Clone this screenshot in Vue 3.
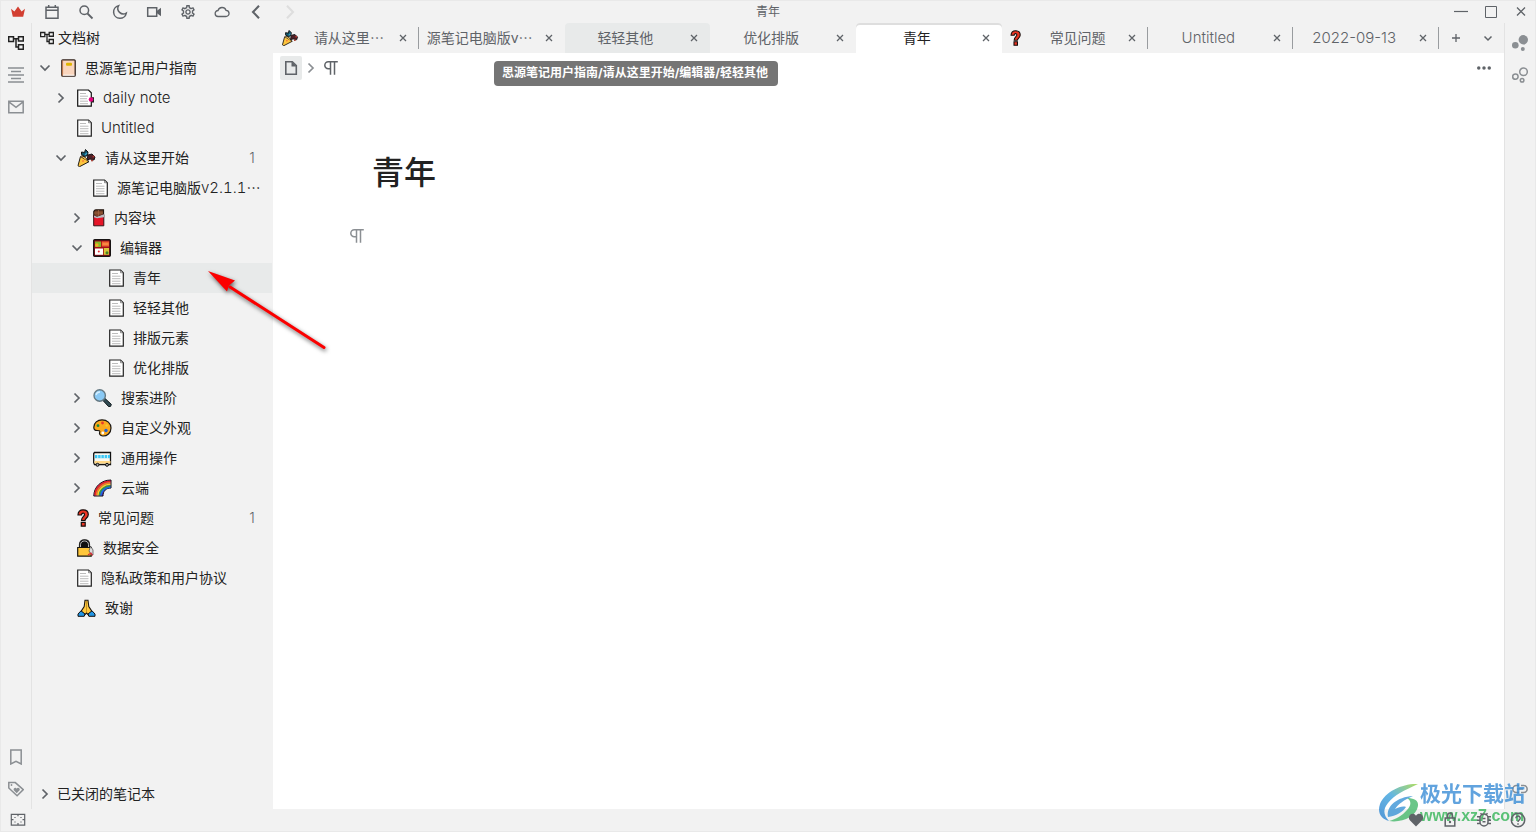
<script setup>
import { ref } from 'vue'

const ui = {
  crown: '<path fill="#d23f31" d="M1 4.800l3.400 2.700L8 2.600l3.600 4.900L15 4.800l-1.800 8H2.800z"/>',
  calendar: '<path d="M2 3.200h12v11H2zM2 6.300h12M4.700 1v2.500M11.300 1v2.500"/>',
  search: '<circle cx="6.300" cy="6.300" r="4.300"/><path d="M9.500 9.500l5 5" stroke-width="1.800"/>',
  moon: '<path d="M6.600 1.700a5.500 5.500 0 0 0 7.700 7.400A6.400 6.400 0 1 1 6.600 1.700z"/>',
  video: '<path d="M1.700 3.700h9v8.600h-9z"/><path d="M10.700 7L15 3.800v8.400L10.700 9z" fill="currentColor" stroke="none"/>',
  gear: '<path transform="translate(-.4 -.4) scale(.7)" fill="currentColor" stroke="none" d="M19.430 12.980c.04-.32.07-.64.07-.98 0-.34-.03-.66-.07-.98l2.110-1.650c.19-.15.24-.42.12-.64l-2-3.460c-.09-.16-.26-.25-.44-.25-.06 0-.12.01-.17.03l-2.490 1c-.52-.4-1.080-.73-1.690-.98l-.38-2.650C14.460 2.180 14.250 2 14 2h-4c-.25 0-.46.18-.49.42l-.38 2.650c-.61.25-1.170.59-1.690.98l-2.490-1c-.06-.02-.12-.03-.18-.03-.17 0-.34.09-.43.25l-2 3.460c-.13.22-.07.49.12.64l2.110 1.650c-.04.32-.07.65-.07.98 0 .33.03.66.07.98l-2.110 1.650c-.19.15-.24.42-.12.64l2 3.460c.09.16.26.25.44.25.06 0 .12-.01.17-.03l2.490-1c.52.4 1.080.73 1.690.98l.38 2.650c.03.24.24.42.49.42h4c.25 0 .46-.18.49-.42l.38-2.650c.61-.25 1.170-.59 1.690-.98l2.490 1c.06.02.12.03.18.03.17 0 .34-.09.43-.25l2-3.460c.12-.22.07-.49-.12-.64l-2.110-1.650zm-1.980-1.710c.04.31.05.52.05.73 0 .21-.02.43-.05.73l-.14 1.130.89.7 1.080.84-.7 1.210-1.270-.51-1.040-.42-.9.68c-.43.32-.84.56-1.250.73l-1.060.43-.16 1.130-.2 1.350h-1.400l-.19-1.350-.16-1.130-1.060-.43c-.43-.18-.83-.41-1.230-.71l-.91-.7-1.060.43-1.270.51-.7-1.210 1.080-.84.89-.7-.14-1.130c-.03-.31-.05-.54-.05-.74s.02-.43.05-.73l.14-1.130-.89-.7-1.080-.84.7-1.210 1.270.51 1.040.42.9-.68c.43-.32.84-.56 1.250-.73l1.060-.43.16-1.130.2-1.350h1.390l.19 1.350.16 1.130 1.060.43c.43.18.83.41 1.230.71l.91.7 1.060-.43 1.270-.51.7 1.210-1.070.85-.89.7.14 1.130zM12 8c-2.210 0-4 1.790-4 4s1.790 4 4 4 4-1.790 4-4-1.790-4-4-4zm0 6c-1.100 0-2-.9-2-2s.9-2 2-2 2 .9 2 2-.9 2-2 2z"/>',
  cloud: '<path d="M4.300 12.500a3 3 0 0 1-.3-6 4.200 4.200 0 0 1 8-.2 3.100 3.100 0 0 1-.1 6.200z" stroke-width="1.300"/>',
  back: '<path d="M11 1.800L5 8l6 6.200" stroke-width="2.100"/>',
  forward: '<path d="M5 1.800L11 8l-6 6.200" stroke-width="2.100"/>',
  minimize: '<path d="M1 7.500h14" stroke-width="1.200"/>',
  maximize: '<path d="M2.500 2.500h11v11h-11z" stroke-width="1"/>',
  close: '<path d="M4 3.500l8 8M12 3.500l-8 8" stroke-width="1.300"/>',
  cross: '<path d="M5 5l6 6M11 5l-6 6" stroke-width="1.300"/>',
  tree: '<path d="M.7 1.700h4.800v4.800H.7zM10.500 1.700h4.800v4.300h-4.800zM10.500 9.700h4.800v4.600h-4.800zM5.500 3.800h5M8 3.800v8.200h2.500"/>',
  outline: '<path d="M0 1h16M3 4.500h10M0 8h16M3 11.500h10M0 15h16" stroke-width="1.500"/>',
  mail: '<path d="M.8 2.300h14.400v11.400H.8zM1.200 3.200L8 8.300l6.800-5.100"/>',
  bookmark: '<path d="M2.800 1h10.400v14L8 12.400 2.800 15z"/>',
  tag: '<path d="M.8 1.600h6.500l8 7-6.200 6.200L.8 7z"/><circle cx="3.500" cy="4" r=".9" fill="currentColor" stroke="none"/><path fill="currentColor" stroke="none" d="M8.700 12.200L5.800 9.300a1.600 1.600 0 0 1 2.900-1.600 1.600 1.600 0 0 1 2.900 1.600z"/>',
  graph: '<g fill="currentColor" stroke="none"><circle cx="11.300" cy="4.800" r="4.700"/><circle cx="3.300" cy="10.300" r="3.300"/><circle cx="10.800" cy="14" r="2"/></g>',
  graphlink: '<circle cx="11.500" cy="4.800" r="3.800"/><circle cx="3.400" cy="9.600" r="2.700"/><circle cx="10.100" cy="13.200" r="1.800"/>',
  down: '<path d="M3.500 5.500L8 10l4.500-4.500" stroke-width="1.700"/>',
  right: '<path d="M5.500 3.500L10 8l-4.500 4.500" stroke-width="1.700"/>',
  smalldown: '<path d="M4.500 6.500L8 10l3.500-3.500"/>',
  plus: '<path d="M8 4v8M4 8h8" stroke-width="1.300"/>',
  more: '<g fill="currentColor" stroke="none"><circle cx="2" cy="8" r="2"/><circle cx="8" cy="8" r="2"/><circle cx="14" cy="8" r="2"/></g>',
  file: '<path d="M2.800 1.700h6.500l4 4v8.600H2.800z" stroke-width="1.600"/><path fill="currentColor" stroke="none" d="M8.500 1.500v5h5z"/>',
  para: '<path d="M6.500 1.700h8.300M7.500 2v12.800M11.500 2v12.800M7.500 8.700H5.300a3.500 3.500 0 0 1 0-7h2.200" stroke-width="1.500"/>',
  fullscreen: '<path d="M1.300 2.300h13.400v10.800H1.300zM8 2.500v1.800M8 11v1.800M1.500 7.700h2M12.500 7.700h2M5 5v1M11 5v1M5 9.500v1M11 9.500v1" stroke-width="1.200"/>',
  heart: '<path fill="currentColor" stroke="none" d="M8 14.500L1.800 8.300C-.7 5 2.300.8 5.600 1.800 7 2.200 7.700 3.200 8 4c.3-.8 1-1.800 2.400-2.200 3.300-1 6.300 3.200 3.800 6.500z"/>',
  lock: '<path d="M3.200 6h9.600v8H3.200zM5.700 6V3.300a2.300 2.300 0 0 1 4.600 0V6"/><circle cx="8" cy="10" r="1.200" fill="currentColor" stroke="none"/>',
  bug: '<path d="M4 6a4 4 0 0 1 8 0v4a4 4 0 0 1-8 0zM4.500 1.300l2 2M11.500 1.300l-2 2M1 4.800h3M12 4.800h3M1 8.200h3M12 8.200h3M1 11.600h3M12 11.600h3M6.500 6.500h3M6.500 9.800h3"/>',
  help: '<circle cx="8" cy="8" r="6.700"/><path d="M5.800 6.300a2.200 2.200 0 1 1 3.300 1.900C8.300 8.700 8 9 8 10M8 11.300v1.400"/>',
  link: '<path d="M7 4.500H4.300a3.500 3.500 0 0 0 0 7H7M9 4.500h2.700a3.500 3.500 0 0 1 0 7H9M5 8h6"/>'
}

// Emoji-style document icons: [width, drawing]; all are 18 high
const emoji = {
  doc: [15, '<path d="M.7 1h10.800l2.800 2.800v13.400H.7z" fill="#fff" stroke="#222" stroke-width="1.200"/><path d="M11.500 1.500v2.300h2.300" fill="#ddd" stroke="#444" stroke-width=".5"/><path d="M3 4.500h6M3 7.200h8.500M3 9.700h8.500M3 12.200h8.500M3 14.700h8.500" stroke="#bcbcbc"/>'],
  daily: [17, '<path d="M.7 1h10.800l2.800 2.800v13.400H.7z" fill="#fff" stroke="#111" stroke-width="1.200"/><path d="M3 4.500h6M3 7.200h8M3 9.700h7M3 12.200h8M3 14.700h8" stroke="#bcbcbc"/><path d="M14 8.200h3v5.300h-3z" fill="#222"/><circle cx="14" cy="10.500" r="2.300" fill="#e4007f"/>'],
  book: [15, '<rect x=".8" y=".8" width="13.400" height="16.400" rx="1" fill="#f9d5bd" stroke="#30231c" stroke-width="1.300"/><path d="M1.500 1.500v15" stroke="#bd7950" stroke-width="1.200"/><path d="M2 16.200h11.500" stroke="#fff"/><rect x="5" y="3.700" width="6" height="3" rx="1" fill="#dfb400"/>'],
  party: [19, '<path d="M3.500 7.500L1 16.700l1.500 1 9.500-5z" fill="#fcc43d" stroke="#221d15" stroke-width="1"/><path d="M4 7c2-.8 7 2.800 7.500 6" fill="#ffc341" stroke="#222"/><path d="M4.500 3l3 .5 1-3 2.500 2.500-.5 3.500-3 1-3-2z" fill="#12566b" stroke="#111" stroke-width="1"/><path d="M11 6l4-1 3 3-1 3-4-1-3 1z" fill="#4d2027" stroke="#17151a"/><path d="M8 6l2-2" stroke="#39a4cc" stroke-width="1.200"/><circle cx="16.500" cy="7.500" r="1" fill="#b5352e"/><circle cx="6" cy="12" r=".8" fill="#f55637"/><circle cx="15" cy="11.500" r="1" fill="#a33429"/>'],
  choco: [12, '<path d="M.8 2.500Q1.500.7 3 .8h7.500v7H.8z" fill="#7c4428" stroke="#221813" stroke-width="1.200"/><path d="M1 4h9M5.500 1v6" stroke="#a86a46" stroke-width=".7"/><path d="M.7 6.500L4 7.800l6.800-2.300v11.300H.7z" fill="#e51528" stroke="#351316"/><path d="M1 6.500l3 1.300 7-2.500v3l-7 1-3-1z" fill="#bcbcc1"/>'],
  bento: [18, '<rect x=".7" y=".7" width="16.600" height="16.600" rx="1" fill="#a60c18" stroke="#171313" stroke-width="1.400"/><path d="M2 2.500h6v5.500H2z" fill="#85b928"/><path d="M8.800 2.500h7.200v5H8.800z" fill="#f06432"/><path d="M2 9.500h8v6.300H2z" fill="#fff"/><path d="M10.800 9h5.200v6.800h-5.200z" fill="#d8c53b"/><circle cx="3.800" cy="6" r="1.800" fill="#f5aa22"/><circle cx="5.800" cy="12.500" r="1" fill="#e72a30"/><circle cx="14" cy="13.700" r="1.500" fill="#468525"/><path d="M9.500 5h6" stroke="#ffab55"/>'],
  magnifier: [19, '<path d="M10 10l1.500-1 6.800 6.300-.6 2-2 .4-6-6.500z" fill="#314b53" stroke="#131b1e"/><circle cx="6.700" cy="6.500" r="5.700" fill="#8ac9f4" stroke="#657983" stroke-width="1.400"/><path d="M3 6a4 4 0 0 1 4-3" stroke="#d5efff" fill="none" stroke-width="1.300"/>'],
  palette: [19, '<path d="M9 .8c5 0 9 3.500 9 8.200 0 5-4 8.200-8.300 8-2.500-.1-3.800-2-3-4 .5-1.400-.5-1.500-2.500-1.500C1.500 11.500.8 10 .8 8.200.8 4 4.500.8 9 .8z" fill="#fca91d" stroke="#1a1713" stroke-width="1.200"/><circle cx="5" cy="6.700" r="1.400" fill="#178a3d"/><circle cx="9.500" cy="4" r="1.400" fill="#e93b2f"/><circle cx="13.700" cy="6.500" r="1.200" fill="#f9c82b"/><circle cx="13" cy="11.500" r="1.700" fill="#2463d3"/><circle cx="9.800" cy="14" r="1.400" fill="#fff"/>'],
  bus: [19, '<path d="M1.500 3.500h16v12h-16l-.8-2v-9z" fill="#f8f8f1" stroke="#111" stroke-width="1.300"/><path d="M2 6h15v3.200H2z" fill="#3cc7f4"/><path d="M4.700 6v3.200M8 6v3.200M11.300 6v3.200M14.500 6v3.200" stroke="#fff" stroke-width=".7"/><path d="M1.500 12h16v2.500h-16z" fill="#ffd684"/><circle cx="4.500" cy="15.800" r="1.500" fill="#aaa" stroke="#111"/><circle cx="14" cy="15.800" r="1.500" fill="#aaa" stroke="#111"/>'],
  rainbow: [19, '<path d="M.8 17C.8 8 8 1 18 1v8c-5 0-8 3-8 8z" fill="#5b2ac0" stroke="#111"/><g fill="none" stroke-width="1.600"><path d="M2 16.500C2 8.500 9 2.300 17.500 2.300" stroke="#e82323"/><path d="M3.500 16.500C3.500 9.500 10 3.800 17.500 3.800" stroke="#f77a19"/><path d="M5 16.500C5 10.500 11 5.300 17.500 5.300" stroke="#f9d328"/><path d="M6.500 16.500c0-5.500 5.300-9.700 11-9.700" stroke="#349b43"/><path d="M8 16.500c0-4.500 4.300-8.300 9.500-8.300" stroke="#176de0"/></g>'],
  question: [12, '<path d="M1 6C1 2.500 3 .8 6 .8c3.500 0 5.300 2 5.300 4.700 0 3.300-3.300 4-3.300 6H4.500c0-3.500 3-4.200 3-5.800 0-2.400-3-2-3 .3zM4.300 13.300h3.900v3.900H4.300z" fill="#e93422" stroke="#140e0d" stroke-width="1.200"/>'],
  padlock: [17, '<path d="M2.500 9V5.500C2.500 2.500 4.700.8 7.500.8s5 1.700 5 4.700V9" fill="#111" stroke="#222" stroke-width="1.200"/><path d="M3.500 9V5.700c0-2.500 2-3.700 4-3.700s4 1.200 4 3.700V9" fill="none" stroke="#b6b6b6"/><path d="M.7 8.500h13.500v8.700H.7z" fill="#ffc63a" stroke="#171512" stroke-width="1.200"/><path d="M13.500 7l2.500 4v5l-2-1-2-3z" fill="#ddd" stroke="#222" stroke-width=".6"/><path d="M11 16l3-2 1.500 2.500" stroke="#dd2839" stroke-width="1.200" fill="none"/>'],
  pray: [19, '<path d="M8 1.200h3l.8 6.300 3.200 5-3.500 3.500-2-2-2 2L4 12.500l3.200-5z" fill="#ffc83d" stroke="#1c1711" stroke-width="1.100"/><path d="M9.500 2v11" stroke="#c99524"/><path d="M1 15l3-3.200L8 15l-.8 2.300H1zM18 15l-3-3.200-4 3.200.8 2.300H18z" fill="#2396e4" stroke="#111"/>']
}

const tools = [
  ['crown', '会员'], ['calendar', '日记'], ['search', '搜索'], ['moon', '外观'], ['video', '录屏'],
  ['gear', '设置'], ['cloud', '云端同步'], ['back', '后退'], ['forward', '前进']
]
const windowTools = [['minimize', '最小化'], ['maximize', '最大化'], ['close', '关闭']]
const statusTools = [['heart', '赞助'], ['lock', '锁屏'], ['bug', '调试'], ['help', '帮助']]

const tabs = [
  { text: '请从这里', cut: true, icon: 'party', line: true },
  { text: '源笔记电脑版v', cut: true },
  { text: '轻轻其他', hover: true },
  { text: '优化排版' },
  { text: '青年' },
  { text: '常见问题', icon: 'question', line: true },
  { latin: 'Untitled', line: true },
  { latin: '2022-09-13', line: true }
]
const activeTab = ref(4)

const rows = [
  { level: 0, arrow: 'down', icon: 'book', text: '思源笔记用户指南' },
  { level: 1, arrow: 'right', icon: 'daily', latin: 'daily note' },
  { level: 1, icon: 'doc', latin: 'Untitled' },
  { level: 1, arrow: 'down', icon: 'party', text: '请从这里开始', count: 1 },
  { level: 2, icon: 'doc', text: '源笔记电脑版', latin: 'v2.1.1', cut: true },
  { level: 2, arrow: 'right', icon: 'choco', text: '内容块' },
  { level: 2, arrow: 'down', icon: 'bento', text: '编辑器' },
  { level: 3, icon: 'doc', text: '青年' },
  { level: 3, icon: 'doc', text: '轻轻其他' },
  { level: 3, icon: 'doc', text: '排版元素' },
  { level: 3, icon: 'doc', text: '优化排版' },
  { level: 2, arrow: 'right', icon: 'magnifier', text: '搜索进阶' },
  { level: 2, arrow: 'right', icon: 'palette', text: '自定义外观' },
  { level: 2, arrow: 'right', icon: 'bus', text: '通用操作' },
  { level: 2, arrow: 'right', icon: 'rainbow', text: '云端' },
  { level: 1, icon: 'question', text: '常见问题', count: 1 },
  { level: 1, icon: 'padlock', text: '数据安全' },
  { level: 1, icon: 'doc', text: '隐私政策和用户协议' },
  { level: 1, icon: 'pray', text: '致谢' }
]
const activeRow = ref(7)
</script>

<template>
  <div class="app" lang="zh-CN">
    <header class="toolbar">
      <div class="tools start">
        <button v-for="t in tools" :key="t[0]" :class="['tool', t[0]]" :aria-label="t[1]">
          <svg class="ic" viewBox="0 0 16 16" v-html="ui[t[0]]"></svg>
        </button>
      </div>
      <div class="title">青年</div>
      <div class="tools end">
        <button v-for="t in windowTools" :key="t[0]" class="tool win" :aria-label="t[1]">
          <svg class="ic" viewBox="0 0 16 16" v-html="ui[t[0]]"></svg>
        </button>
      </div>
    </header>

    <div class="body">
      <nav class="dock left">
        <button class="dock-btn on" aria-label="文档树"><svg class="ic" viewBox="0 0 16 16" v-html="ui.tree"></svg></button>
        <button class="dock-btn" aria-label="大纲"><svg class="ic" viewBox="0 0 16 16" v-html="ui.outline"></svg></button>
        <button class="dock-btn" aria-label="收集箱"><svg class="ic" viewBox="0 0 16 16" v-html="ui.mail"></svg></button>
        <span class="grow"></span>
        <button class="dock-btn" aria-label="书签"><svg class="ic" viewBox="0 0 16 16" v-html="ui.bookmark"></svg></button>
        <button class="dock-btn" aria-label="标签"><svg class="ic" viewBox="0 0 16 16" v-html="ui.tag"></svg></button>
      </nav>

      <aside class="sidebar">
        <div class="side-head">
          <svg class="ic s14" viewBox="0 0 16 16" v-html="ui.tree"></svg>
          <span>文档树</span>
        </div>
        <ul class="tree">
          <li v-for="(r, i) in rows" :key="i" :class="['row', 'level' + r.level, { active: activeRow === i }]">
            <button v-if="r.arrow" class="arrow" aria-label="展开或折叠">
              <svg class="ic" viewBox="0 0 16 16" v-html="ui[r.arrow]"></svg>
            </button>
            <span v-else class="arrow"></span>
            <button class="item" @click="activeRow = i">
              <svg class="emoji" :width="emoji[r.icon][0]" height="18" :viewBox="`0 0 ${emoji[r.icon][0]} 18`" v-html="emoji[r.icon][1]"></svg>
              <span class="label">{{ r.text }}<span v-if="r.latin" class="latin">{{ r.latin }}</span><span v-if="r.cut" class="dots">…</span></span>
            </button>
            <span v-if="r.count" class="count">{{ r.count }}</span>
          </li>
        </ul>
        <button class="closed">
          <svg class="ic" viewBox="0 0 16 16" v-html="ui.right"></svg>
          <span>已关闭的笔记本</span>
        </button>
      </aside>

      <main class="main">
        <div class="tabbar">
          <div class="tabs">
            <div v-for="(t, i) in tabs" :key="i" :class="['tab', { active: activeTab === i, hover: t.hover, line: t.line }]">
              <button class="tab-main" @click="activeTab = i">
                <span v-if="t.icon" class="tab-icon">
                  <svg :width="emoji[t.icon][0] - 1" height="16" :viewBox="`0 0 ${emoji[t.icon][0]} 18`" v-html="emoji[t.icon][1]"></svg>
                </span>
                <span class="tab-label">{{ t.text }}<span v-if="t.latin" class="latin">{{ t.latin }}</span><span v-if="t.cut" class="dots">…</span></span>
              </button>
              <button class="tab-close" aria-label="关闭标签"><svg class="ic" viewBox="0 0 16 16" v-html="ui.cross"></svg></button>
            </div>
          </div>
          <button class="tab-tool" aria-label="新建"><svg class="ic" viewBox="0 0 16 16" v-html="ui.plus"></svg></button>
          <button class="tab-tool" aria-label="更多标签"><svg class="ic" viewBox="0 0 16 16" v-html="ui.smalldown"></svg></button>
        </div>
        <div class="crumbs">
          <button class="crumb-file" aria-label="文档"><svg class="ic" viewBox="0 0 16 16" v-html="ui.file"></svg></button>
          <svg class="ic crumb-sep" viewBox="0 0 16 16" v-html="ui.right"></svg>
          <button class="crumb-para" aria-label="段落"><svg class="ic" viewBox="0 0 16 16" v-html="ui.para"></svg></button>
          <span class="grow"></span>
          <button class="crumb-more" aria-label="更多"><svg class="ic s14" viewBox="0 0 16 16" v-html="ui.more"></svg></button>
        </div>
        <article class="doc">
          <h1>青年</h1>
          <button class="gutter" aria-label="段落块"><svg class="ic" viewBox="0 0 16 16" v-html="ui.para"></svg></button>
        </article>
        <div class="tooltip" role="tooltip">思源笔记用户指南/请从这里开始/编辑器/轻轻其他</div>
      </main>

      <nav class="dock right">
        <button class="dock-btn" aria-label="关系图"><svg class="ic" viewBox="0 0 16 16" v-html="ui.graph"></svg></button>
        <button class="dock-btn" aria-label="全局关系图"><svg class="ic" viewBox="0 0 16 16" v-html="ui.graphlink"></svg></button>
        <span class="grow"></span>
        <button class="dock-btn" aria-label="反向链接"><svg class="ic" viewBox="0 0 16 16" v-html="ui.link"></svg></button>
      </nav>
    </div>

    <footer class="status">
      <button class="tool" aria-label="停靠栏"><svg class="ic" viewBox="0 0 16 16" v-html="ui.fullscreen"></svg></button>
      <div class="tools end">
        <button v-for="t in statusTools" :key="t[0]" class="tool" :aria-label="t[1]">
          <svg class="ic" viewBox="0 0 16 16" v-html="ui[t[0]]"></svg>
        </button>
      </div>
    </footer>

    <svg class="pointer" width="140" height="100" viewBox="0 0 140 100">
      <g transform="translate(-200 -260)">
        <path d="M230 287L324 347.500" stroke="#fb0000" stroke-width="3" stroke-linecap="round" />
        <path d="M208 271L235 280.500L229 285.500L227 291.500Z" fill="#fb0000" />
      </g>
    </svg>

    <div class="watermark">
      <svg width="46" height="42" viewBox="0 0 46 42">
        <defs>
          <linearGradient id="swoosh" x1="0" y1="1" x2="1" y2="0">
            <stop offset="0" stop-color="#2b7fd0" />
            <stop offset=".5" stop-color="#3da4dd" />
            <stop offset="1" stop-color="#9cd53c" />
          </linearGradient>
        </defs>
        <path fill="url(#swoosh)" d="M41 2C27 1 8 9 3 22c-3 9 1 15 9 17C6 33 6 27 11 21 17 13 28 8 41 2z" />
        <path fill="#46b96c" d="M12 39c13 2 27-4 29-15 1-6-5-8-11-8 5 3 4 8 0 12-5 6-11 9-18 11z" />
        <path fill="#3a94d6" d="M11 35c-2-11 9-20 25-21-9 4-15 8-18 13 4-2 8-3 11-2-3 5-10 9-18 10z" />
      </svg>
      <div class="mark-text">
        <span class="mark-name">极光下载站</span>
        <span class="mark-url">www.xz7.com</span>
      </div>
    </div>
  </div>
</template>

<style>
body {
  background: #f2f2f2;
}
</style>

<style scoped>
.app {
  position: relative;
  display: flex;
  flex-direction: column;
  min-height: 100vh;
  box-sizing: border-box;
  overflow: hidden;
  background: #f2f2f2;
  box-shadow: inset 0 0 0 1px #e9e9e9;
  color: #222;
  font-family: Inter, "Noto Sans CJK SC", sans-serif;
  font-size: 14px;
  line-height: 20px;
}
button {
  display: flex;
  align-items: center;
  justify-content: center;
  margin: 0;
  padding: 0;
  border: 0;
  background: none;
  color: inherit;
  font: inherit;
  cursor: pointer;
}
.ic {
  display: block;
  flex: none;
  width: 16px;
  height: 16px;
  fill: none;
  stroke: currentColor;
  stroke-width: 1.5;
}
.crown .ic {
  stroke: none;
}
.s14 {
  width: 14px;
  height: 14px;
}
.grow {
  flex: 1;
}
.latin {
  font-size: 15px;
  font-weight: 300;
}
.dots {
  font-family: "Noto Sans CJK SC", sans-serif;
  line-height: 1;
}
.toolbar {
  display: grid;
  grid-template-columns: 1fr auto 1fr;
  align-items: center;
  height: 23px;
  color: #5f6368;
}
.tools {
  display: flex;
}
.start {
  padding-left: 1px;
}
.end {
  justify-content: flex-end;
}
.tool {
  width: 34px;
  height: 22px;
}
.forward {
  color: #dedede;
}
.win {
  width: 30px;
}
.title {
  padding-top: 1px;
  font-size: 12px;
}
.body {
  flex: 1;
  display: flex;
  min-height: 0;
}
.dock {
  display: flex;
  flex-direction: column;
  flex: none;
  box-sizing: border-box;
  width: 32px;
  padding: 4px 0;
  color: #8b8f93;
}
.left {
  border-right: 1px solid #e3e3e3;
}
.right {
  padding-right: 1px;
  border-left: 1px solid #e3e3e3;
}
.dock-btn {
  height: 32px;
}
.dock-btn.on {
  color: #222;
}
.sidebar {
  display: flex;
  flex-direction: column;
  flex: none;
  width: 240px;
  padding-right: 1px;
}
.side-head {
  display: flex;
  align-items: center;
  gap: 4px;
  height: 30px;
  padding-left: 8px;
}
.tree {
  flex: 1;
  margin: 0;
  padding: 0;
  list-style: none;
}
.row {
  display: flex;
  align-items: center;
  height: 30px;
  padding-right: 16px;
}
.level0 { padding-left: 5px; }
.level1 { padding-left: 21px; }
.level2 { padding-left: 37px; }
.level3 { padding-left: 53px; }
.row.active {
  background: #e8eaea;
}
.arrow {
  flex: none;
  width: 16px;
  height: 30px;
  color: #5f6368;
}
.item {
  flex: 1;
  justify-content: flex-start;
  gap: 9px;
  height: 30px;
  min-width: 0;
  padding-left: 8px;
}
.emoji {
  flex: none;
}
.label {
  font-variant-numeric: tabular-nums;
  white-space: nowrap;
}
.count {
  width: 8px;
  color: #5f6368;
  font-weight: 300;
  text-align: center;
}
.closed {
  justify-content: flex-start;
  gap: 4px;
  height: 30px;
  padding-left: 5px;
}
.closed .ic {
  color: #5f6368;
}
.main {
  position: relative;
  display: flex;
  flex-direction: column;
  flex: 1;
  min-width: 0;
  background: #fff;
}
.tabbar {
  display: flex;
  height: 30px;
  background: #f2f2f2;
  color: #5f6368;
}
.tabs {
  display: flex;
  flex: 1;
  min-width: 0;
  margin-right: 1px;
}
.tab {
  position: relative;
  display: flex;
  align-items: center;
  flex: 1;
  gap: 8px;
  min-width: 0;
  box-sizing: border-box;
  padding: 0 8px;
}
.tab.line::after {
  content: "";
  position: absolute;
  right: 0;
  top: 4px;
  bottom: 4px;
  width: 1px;
  background: #999c9f;
}
.tab.hover {
  border-radius: 4px 4px 0 0;
  background: #e8eaea;
}
.tab.active {
  border-radius: 4px 4px 0 0;
  background: #fff;
  box-shadow: inset 0 2px 0 #dedede;
  color: #222;
}
.tab-main {
  flex: 1;
  gap: 8px;
  min-width: 0;
  height: 30px;
}
.tab-icon {
  display: flex;
  flex: none;
  width: 22px;
}
.tab-label {
  flex: 1;
  white-space: nowrap;
}
.tab-close {
  color: #5f6368;
}
.tab-close,
.tab-close .ic {
  width: 16px;
}
.tab-tool {
  width: 32px;
}
.crumbs {
  display: flex;
  align-items: center;
  height: 30px;
  padding: 0 13px 0 7px;
  color: #5f6368;
}
.crumb-file {
  width: 22px;
  height: 24px;
  border-radius: 2px;
  background: #e8eaea;
}
.crumb-sep {
  margin: 0 4px 0 1px;
  color: #8b8f93;
}
.doc {
  padding: 66px 76px;
}
h1 {
  margin: 0 0 0 23px;
  font-size: 32px;
  font-weight: 500;
  line-height: 48px;
}
.gutter {
  margin-top: 31px;
  color: #8b8f93;
}
.gutter .ic {
  stroke-width: 1;
}
.tooltip {
  position: absolute;
  top: 38px;
  left: 221px;
  padding: 2px 10px 3px 8px;
  border-radius: 4px;
  background: #757575;
  color: #fff;
  font-size: 12px;
  font-weight: 700;
  white-space: nowrap;
}
.status {
  position: relative;
  z-index: 2;
  display: flex;
  justify-content: space-between;
  height: 23px;
  padding: 0 1px;
  color: #5f6368;
}
.pointer {
  position: absolute;
  left: 200px;
  top: 260px;
  filter: drop-shadow(1px 2px 2px rgba(0, 0, 0, 0.6));
  pointer-events: none;
}
.watermark {
  position: absolute;
  right: 11px;
  bottom: 7px;
  display: flex;
  align-items: center;
  opacity: 0.8;
  pointer-events: none;
}
.mark-text {
  display: flex;
  flex-direction: column;
  margin-left: -3px;
}
.mark-name {
  color: #3a8dd6;
  font-size: 21px;
  font-weight: 700;
  line-height: 26px;
}
.mark-url {
  color: #35b558;
  font-family: "Liberation Sans", sans-serif;
  font-size: 16px;
  font-weight: 700;
  line-height: 18px;
}
</style>
